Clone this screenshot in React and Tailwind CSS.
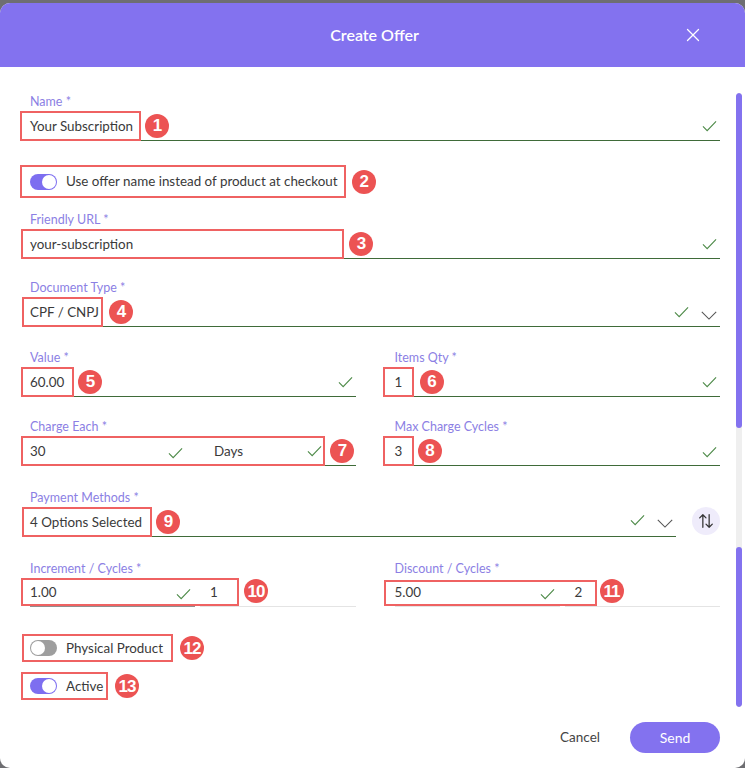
import { X } from "lucide-react";

function Check({ className = "" }) {
  return (
    <svg
      viewBox="0 0 16 12"
      className={`w-[15px] h-[12px] shrink-0 ${className}`}
      fill="none"
      stroke="#4d8a48"
      strokeWidth="1.2"
    >
      <path d="M1 6.5 L5.5 11 L15 1" />
    </svg>
  );
}

function Chevron({ className = "" }) {
  return (
    <svg
      viewBox="0 0 18 10"
      className={`w-[18px] h-[9px] shrink-0 ${className}`}
      fill="none"
      stroke="#555"
      strokeWidth="1.2"
    >
      <path d="M1 1 L9 9 L17 1" />
    </svg>
  );
}

function Badge({ n, className = "" }) {
  return (
    <span
      className={`flex items-center justify-center w-[24px] h-[24px] rounded-full bg-[#ec5353] text-white text-[17px] font-bold leading-none font-['Liberation_Sans',Arial,sans-serif] tracking-[-1px] shrink-0 ${className}`}
    >
      {n}
    </span>
  );
}

function Box({ h = "h-[30px]", className = "", children }) {
  return (
    <div
      className={`flex items-center self-start border-2 border-[#ef6262] shrink-0 ${h} ${className}`}
    >
      {children}
    </div>
  );
}

function Label({ children }) {
  return (
    <div className="text-[12.5px] leading-[16px] text-[#8c7fe4] mb-px">
      {children}
    </div>
  );
}

function Toggle({ on }) {
  return (
    <span
      className={`flex items-center w-[27px] h-[16px] rounded-full shrink-0 p-px ${
        on ? "bg-[#7d6ef0] justify-end" : "bg-[#9e9e9e] justify-start"
      }`}
    >
      <span className="w-[14px] h-[14px] rounded-full bg-white" />
    </span>
  );
}

const row = "flex items-center h-[30px] border-b border-[#3f6b39]";

export default function App() {
  return (
    <div className="min-h-screen bg-[#6e6e72] pt-[3px] font-['Lato','Noto_Sans',sans-serif] text-[13.4px] text-[#3a3a3a]">
      <div className="relative h-[765px] bg-white rounded-[10px] overflow-hidden flex flex-col">
        <div className="grid grid-cols-[1fr_auto_1fr] items-center h-[64px] bg-[#8372ef] shrink-0">
          <div />
          <div className="text-white text-[16px] font-semibold pl-[4px]">Create Offer</div>
          <div className="flex justify-end pr-[41px]">
            <X size={22} strokeWidth={1.4} color="white" />
          </div>
        </div>

        <div className="flex flex-col pl-[30px] pr-[25px] pt-[27px]">
          <Label>Name *</Label>
          <div className={row}>
            <Box className="-ml-[10px] pl-[8px] pr-[6px]">Your Subscription</Box>
            <Badge n="1" className="ml-[4px]" />
            <div className="flex-1" />
            <Check className="mr-[3px]" />
          </div>

          <div className="flex items-center mt-[24px]">
            <Box h="h-[33px]" className="-ml-[10px] pl-[8px] pr-[6px] gap-[9px]">
              <Toggle on />
              <span>Use offer name instead of product at checkout</span>
            </Box>
            <Badge n="2" className="ml-[6px]" />
          </div>

          <div className="mt-[14px]">
            <Label>Friendly URL *</Label>
            <div className={row}>
              <Box className="-ml-[9px] w-[323px] pl-[7px]">your-subscription</Box>
              <Badge n="3" className="ml-[5px]" />
              <div className="flex-1" />
              <Check className="mr-[3px]" />
            </div>
          </div>

          <div className="mt-[21px]">
            <Label>Document Type *</Label>
            <div className={row}>
              <Box className="-ml-[8px] w-[81px] pl-[6px]">CPF / CNPJ</Box>
              <Badge n="4" className="ml-[6px]" />
              <div className="flex-1" />
              <Check />
              <Chevron className="ml-[11px] mr-[2px] mt-[8px]" />
            </div>
          </div>

          <div className="grid grid-cols-2 gap-x-[39px] mt-[23px]">
            <div>
              <Label>Value *</Label>
              <div className={row}>
                <Box className="-ml-[9px] w-[53px] pl-[7px]">60.00</Box>
                <Badge n="5" className="ml-[4px]" />
                <div className="flex-1" />
                <Check className="mr-[3px]" />
              </div>
            </div>
            <div>
              <Label>Items Qty *</Label>
              <div className={row}>
                <Box className="-ml-[12px] w-[31px] pl-[10px]">1</Box>
                <Badge n="6" className="ml-[6px]" />
                <div className="flex-1" />
                <Check className="mr-[3px]" />
              </div>
            </div>

            <div className="mt-[22px]">
              <Label>Charge Each *</Label>
              <div className={row}>
                <Box className="-ml-[9px] w-[304px] pl-[7px]">
                  <span className="w-[138px]">30</span>
                  <Check className="mt-[3px]" />
                  <span className="ml-[31px] w-[93px]">Days</span>
                  <Check />
                </Box>
                <Badge n="7" className="ml-[5px]" />
              </div>
            </div>
            <div className="mt-[22px]">
              <Label>Max Charge Cycles *</Label>
              <div className={row}>
                <Box className="-ml-[12px] w-[31px] pl-[10px]">3</Box>
                <Badge n="8" className="ml-[4px]" />
                <div className="flex-1" />
                <Check className="mr-[3px] mt-[2px]" />
              </div>
            </div>
          </div>

          <div className="flex items-end mt-[24px]">
            <div className="flex-1">
              <Label>Payment Methods *</Label>
              <div className={row}>
                <Box className="-ml-[8px] w-[130px] pl-[6px]">4 Options Selected</Box>
                <Badge n="9" className="ml-[4px]" />
                <div className="flex-1" />
                <Check className="-mt-[4px]" />
                <Chevron className="ml-[11px] mr-[2px] mt-[4px]" />
              </div>
            </div>
            <div className="flex items-center justify-center w-[28px] h-[28px] rounded-full bg-[#efecfb] ml-[16px] mb-[2px]">
              <svg viewBox="0 0 20 20" className="w-[18px] h-[18px]" fill="none" stroke="#333" strokeWidth="1.4" strokeLinecap="round" strokeLinejoin="round">
                <path d="M6.5 17 V3 M3 6.5 L6.5 3 L10 6.5" />
                <path d="M13.5 3 V17 M10 13.5 L13.5 17 L17 13.5" />
              </svg>
            </div>
          </div>

          <div className="grid grid-cols-2 gap-x-[39px] mt-[24px]">
            <div>
              <Label>Increment / Cycles *</Label>
              <div className="relative flex h-[29px]">
                <div className="flex items-center w-[165px] border-b border-[#8f8f8f]">
                  <span className="flex-1">1.00</span>
                  <Check className="mr-[4px] mt-[3px]" />
                </div>
                <div className="flex items-center flex-1 ml-[5px] pl-[10px] border-b border-[#e4e4e4]">1</div>
                <div className="absolute -left-[9px] top-0 w-[218px] h-[28px] border-2 border-[#ef6262]" />
                <Badge n="10" className="absolute left-[214px] top-[1px]" />
              </div>
            </div>
            <div>
              <Label>Discount / Cycles *</Label>
              <div className="relative flex h-[29px]">
                <div className="flex items-center w-[165px] border-b border-[#e4e4e4]">
                  <span className="flex-1">5.00</span>
                  <Check className="mr-[5px] mt-[3px]" />
                </div>
                <div className="flex items-center flex-1 ml-[5px] pl-[10px] border-b border-[#e4e4e4]">2</div>
                <div className="absolute -left-[11px] top-[2px] w-[213px] h-[26px] border-2 border-[#ef6262]" />
                <Badge n="11" className="absolute left-[205px] top-[1px]" />
              </div>
            </div>
          </div>

          <div className="flex items-center mt-[27px]">
            <Box h="h-[28px]" className="-ml-[8px] w-[151px] pl-[6px] gap-[9px]">
              <Toggle />
              <span>Physical Product</span>
            </Box>
            <Badge n="12" className="ml-[7px]" />
          </div>

          <div className="flex items-center mt-[10px]">
            <Box h="h-[28px]" className="-ml-[9px] w-[87px] pl-[7px] gap-[9px]">
              <Toggle on />
              <span>Active</span>
            </Box>
            <Badge n="13" className="ml-[7px]" />
          </div>
        </div>

        <div className="flex items-center justify-end gap-[30px] pr-[25px] mt-[22px]">
          <span className="text-[13.5px] text-[#444]">Cancel</span>
          <button className="w-[90px] h-[31px] rounded-full bg-[#8372ef] text-white text-[14px]">
            Send
          </button>
        </div>

        <div className="absolute right-[3px] top-[90px] w-[6px] h-[614px] flex flex-col rounded-full overflow-hidden bg-[#efefef]">
          <div className="h-[335px] bg-[#8372ef] rounded-full" />
          <div className="h-[119px]" />
          <div className="flex-1 bg-[#8372ef] rounded-full" />
        </div>
      </div>
    </div>
  );
}
